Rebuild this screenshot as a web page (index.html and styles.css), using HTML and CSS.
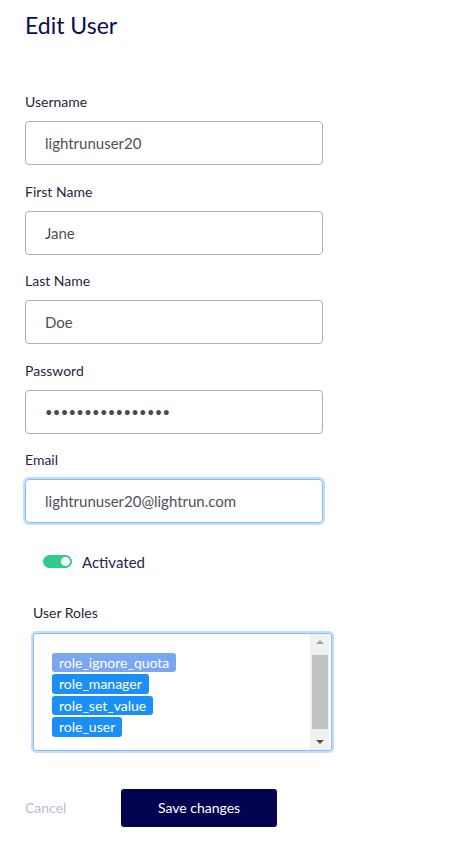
FILE: index.html
```html
<!DOCTYPE html>
<html>
<head>
<meta charset="utf-8">
<link rel="stylesheet" href="styles.css">
</head>
<body>
<div class="page">
  <h1 class="title">Edit User</h1>
  <form class="form">
    <div class="field">
      <label class="label">Username</label>
      <div class="input">lightrunuser20</div>
    </div>
    <div class="field">
      <label class="label">First Name</label>
      <div class="input">Jane</div>
    </div>
    <div class="field">
      <label class="label">Last Name</label>
      <div class="input">Doe</div>
    </div>
    <div class="field">
      <label class="label">Password</label>
      <div class="input password">••••••••••••••••</div>
    </div>
    <div class="field">
      <label class="label">Email</label>
      <div class="input focused">lightrunuser20@lightrun.com</div>
    </div>
    <div class="toggle-row">
      <span class="toggle"><span class="knob"></span></span>
      <span class="toggle-label">Activated</span>
    </div>
    <div class="roles">
      <label class="label">User Roles</label>
      <div class="listbox">
        <div class="tags">
          <span class="tag light">role_ignore_quota</span>
          <span class="tag">role_manager</span>
          <span class="tag">role_set_value</span>
          <span class="tag">role_user</span>
        </div>
        <div class="scrollbar">
          <span class="arrow up"></span>
          <span class="thumb"></span>
          <span class="arrow down"></span>
        </div>
      </div>
    </div>
    <div class="actions">
      <span class="cancel">Cancel</span>
      <span class="save">Save changes</span>
    </div>
  </form>
</div>
</body>
</html>
```
FILE: styles.css
```css
* { box-sizing: border-box; }
html, body { margin: 0; padding: 0; background: #fff; }
body { font-family: "Lato", "Noto Sans", sans-serif; }
.page { padding: 10px 0 0 25px; width: 449px; }
.title {
  margin: 0;
  font-size: 23px;
  line-height: 30px;
  font-weight: 400;
  color: #0b0b5a;
}
.form { margin-top: 52px; display: flex; flex-direction: column; }
.field { display: flex; flex-direction: column; margin-bottom: 16.5px; width: 298px; }
.label {
  font-size: 14px;
  line-height: 20px;
  color: #2a1f3d;
  margin-bottom: 9px;
}
.input {
  height: 44px;
  border: 1px solid #a9b0bd;
  border-radius: 4px;
  padding-left: 19px;
  display: flex;
  align-items: center;
  font-size: 15px;
  color: #50505a;
}
.input.password { font-size: 13px; letter-spacing: 0.3px; color: #4a4a52; }
.input.focused {
  border-color: #86bcf8;
  box-shadow: 0 0 0 2px #c3defd;
}
.toggle-row {
  display: flex;
  align-items: center;
  padding-left: 18px;
  margin-top: 11px;
  height: 22px;
}
.toggle {
  width: 29px;
  height: 13px;
  border-radius: 7px;
  background: #2ecb8a;
  display: flex;
  align-items: center;
  justify-content: flex-end;
  padding-right: 2px;
}
.knob { width: 9px; height: 9px; border-radius: 50%; background: #fff; }
.toggle-label { margin-left: 10px; font-size: 15px; color: #25234f; }
.roles { display: flex; flex-direction: column; padding-left: 8px; margin-top: 30px; width: 307px; }
.roles .label { margin-bottom: 10px; }
.listbox {
  height: 118px;
  border: 1px solid #86bcf8;
  box-shadow: 0 0 0 2px #c3defd;
  border-radius: 3px;
  display: flex;
}
.tags {
  flex: 1;
  padding: 19px 0 0 18px;
  display: flex;
  flex-direction: column;
  align-items: flex-start;
  gap: 2px;
}
.tag {
  background: #1a8ff5;
  color: #fff;
  font-size: 14px;
  line-height: 19.5px;
  padding: 0 7px;
  border-radius: 3px;
}
.tag.light { background: #7aa7ef; }
.scrollbar {
  width: 19px;
  background: #f1f1f1;
  display: flex;
  flex-direction: column;
  align-items: center;
  padding: 6px 0;
  margin: 0 2px 0 0;
}
.arrow { width: 0; height: 0; border-left: 4px solid transparent; border-right: 4px solid transparent; }
.arrow.up { border-bottom: 4px solid #a3a3a3; margin-bottom: 11px; }
.arrow.down { border-top: 4px solid #505050; margin-top: 11px; }
.thumb { width: 16px; flex: 1; background: #c1c1c1; }
.actions { display: flex; align-items: center; margin-top: 38px; }
.cancel { font-size: 14px; color: #b3bfd1; width: 96px; }
.save {
  width: 156px;
  height: 38px;
  background: #03034f;
  border-radius: 3px;
  color: #fff;
  font-size: 14px;
  display: flex;
  align-items: center;
  justify-content: center;
}
```
